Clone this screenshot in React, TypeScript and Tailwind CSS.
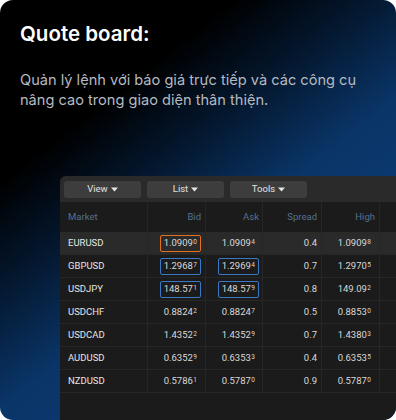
import React from "react";

type Quote = {
  market: string;
  bid: [string, string];
  ask: [string, string];
  spread: string;
  high: [string, string];
  active?: boolean;
  bidBox?: "orange" | "blue";
  askBox?: "blue";
};

const quotes: Quote[] = [
  { market: "EURUSD", bid: ["1.0909", "0"], ask: ["1.0909", "4"], spread: "0.4", high: ["1.0909", "8"], active: true, bidBox: "orange" },
  { market: "GBPUSD", bid: ["1.2968", "7"], ask: ["1.2969", "4"], spread: "0.7", high: ["1.2970", "5"], bidBox: "blue", askBox: "blue" },
  { market: "USDJPY", bid: ["148.57", "1"], ask: ["148.57", "9"], spread: "0.8", high: ["149.09", "2"], bidBox: "blue", askBox: "blue" },
  { market: "USDCHF", bid: ["0.8824", "2"], ask: ["0.8824", "7"], spread: "0.5", high: ["0.8853", "0"] },
  { market: "USDCAD", bid: ["1.4352", "2"], ask: ["1.4352", "9"], spread: "0.7", high: ["1.4380", "3"] },
  { market: "AUDUSD", bid: ["0.6352", "9"], ask: ["0.6353", "3"], spread: "0.4", high: ["0.6353", "5"] },
  { market: "NZDUSD", bid: ["0.5786", "1"], ask: ["0.5787", "0"], spread: "0.9", high: ["0.5787", "0"] },
];

const cols = "grid grid-cols-[88px_58px_57px_59px_58px_1fr]";

const Caret = () => (
  <svg width="7" height="5" viewBox="0 0 7 5" className="ml-[3px]">
    <path d="M0 0.5h7L3.5 4.5z" fill="#e4e4e4" />
  </svg>
);

const ToolButton = ({ label }: { label: string }) => (
  <div className="flex h-[17px] w-[77px] items-center justify-center rounded-[3px] bg-[#3d3d3d] text-[9.5px] text-[#e2e2e2]">
    {label}
    <Caret />
  </div>
);

const Price = ({ value, box }: { value: [string, string]; box?: "orange" | "blue" }) => {
  const border =
    box === "orange"
      ? "border-[#e2701c]"
      : box === "blue"
        ? "border-[#3a77c4]"
        : "border-transparent";
  return (
    <span className={`inline-flex h-[17px] items-center rounded-[2px] border px-[3px] ${border}`}>
      {value[0]}
      <span className="relative top-[-0.5px] ml-[0.5px] text-[6.5px]">{value[1]}</span>
    </span>
  );
};

export default function App() {
  return (
    <div className="h-[420px] w-[396px] overflow-hidden rounded-[13px] bg-[linear-gradient(142deg,#000_25%,#041830_40%,#0a3568_56%,#0d4180_100%)] font-['Inter',sans-serif]">
      <div className="px-5 pt-5">
        <h2 className="text-[20.5px] font-semibold leading-[28px] text-white">Quote board:</h2>
        <p className="mt-[22px] text-[14.6px] leading-[20px] text-[#b5b9c1]">
          Quản lý lệnh với báo giá trực tiếp và các công cụ
          <br />
          nâng cao trong giao diện thân thiện.
        </p>
      </div>

      {/* Quote panel */}
      <div className="ml-[60px] mt-[66px] h-[260px] w-[352px] overflow-hidden rounded-tl-[6px] bg-[#1b1b1b] font-['Roboto',sans-serif]">
        <div className="flex h-[26px] items-center gap-[6px] bg-[#2a2a2a] px-[4px]">
          <ToolButton label="View" />
          <ToolButton label="List" />
          <ToolButton label="Tools" />
        </div>

        <div className={`${cols} h-[30px] text-[9.5px] text-[#56708f]`}>
          <div className="flex items-center border-r border-[#262626] pl-[8px]">Market</div>
          <div className="flex items-center justify-end border-r border-[#262626] pr-[4px]">Bid</div>
          <div className="flex items-center justify-end border-r border-[#262626] pr-[3px]">Ask</div>
          <div className="flex items-center justify-end border-r border-[#262626] pr-[4px]">Spread</div>
          <div className="flex items-center justify-end border-r border-[#262626] pr-[4px]">High</div>
          <div />
        </div>

        {quotes.map((q) => (
          <div
            key={q.market}
            className={`${cols} h-[23px] border-b border-[#262626] text-[9.5px] text-[#d9d9d9] ${q.active ? "bg-[#2a2a2a]" : ""}`}
          >
            <div className="flex items-center border-r border-[#262626] pl-[8px] text-[#e6e6e6]">{q.market}</div>
            <div className="flex items-center justify-end border-r border-[#262626] pr-[4px]">
              <Price value={q.bid} box={q.bidBox} />
            </div>
            <div className="flex items-center justify-end border-r border-[#262626] pr-[3px]">
              <Price value={q.ask} box={q.askBox} />
            </div>
            <div className="flex items-center justify-end border-r border-[#262626] pr-[4px]">{q.spread}</div>
            <div className="flex items-center justify-end border-r border-[#262626] pr-[4px]">
              <Price value={q.high} />
            </div>
            <div />
          </div>
        ))}
      </div>
    </div>
  );
}
